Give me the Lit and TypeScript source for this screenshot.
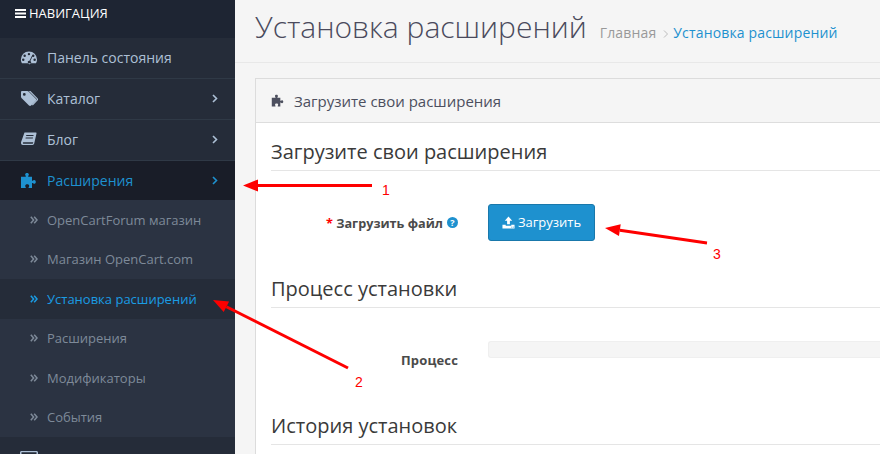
import { LitElement, html, css, svg } from "lit";
import { customElement } from "lit/decorators.js";

const PUZZLE = "M7 1c1.100 0 1.900.7 1.900 1.600 0 .7-.4 1.100-.7 1.500-.2.300-.1.700.3.700H12v3.600c0 .4.400.5.700.3.400-.3.800-.7 1.500-.7.900 0 1.600.8 1.600 1.900s-.7 1.900-1.600 1.900c-.7 0-1.100-.4-1.500-.7-.3-.2-.7-.1-.7.3V16H8.900c-.4 0-.5-.4-.3-.7.300-.4.600-.8.600-1.400 0-.9-.8-1.600-2-1.600s-2 .7-2 1.600c0 .6.300 1 .6 1.400.2.300.1.700-.3.700H1V4.800h4.500c.4 0 .5-.4.300-.7-.3-.4-.7-.8-.7-1.500C5.100 1.700 5.900 1 7 1z";

const ICONS: Record<string, unknown> = {
  dash: svg`<g transform="translate(.4 .6) scale(.95)"><path fill-rule="evenodd" d="M9 3a8.500 8.500 0 0 0-8.500 8.500c0 1.500.4 2.900 1.100 4h14.800c.7-1.100 1.100-2.500 1.100-4A8.500 8.500 0 0 0 9 3zM9 4.500a1.300 1.300 0 1 1 0 2.600 1.300 1.300 0 0 1 0-2.600zM4.500 6.300a1.300 1.300 0 1 1 0 2.600 1.300 1.300 0 0 1 0-2.600zM13.500 6.300a1.300 1.300 0 1 1 0 2.600 1.300 1.300 0 0 1 0-2.600zM3 10.500a1.300 1.300 0 1 1 0 2.600 1.300 1.300 0 0 1 0-2.600zM15 10.500a1.300 1.300 0 1 1 0 2.600 1.300 1.300 0 0 1 0-2.600zM12 7.800l.8.300-2.300 5a1.700 1.700 0 1 1-.9-.3z"/></g>`,
  tags: svg`<path d="M1 3.200C1 2.500 1.500 2 2.200 2h5c.6 0 1.200.3 1.600.7l7 7c.6.600.6 1.500 0 2.100l-4.700 4.700c-.6.600-1.500.6-2.100 0l-7-7C1.600 9.100 1 8.400 1 7.700zM4.300 4a1.400 1.400 0 1 0 0 2.800 1.400 1.400 0 0 0 0-2.800z" fill-rule="evenodd"/><path d="M10.500 2l7 7.200c.7.700.7 1.700 0 2.400l-4.700 4.900-.9-.9 4.600-4.700c.3-.3.300-.8 0-1.100L8.800 2z"/>`,
  book: svg`<path fill-rule="evenodd" d="M4.500 2.500h11.300c.5 0 .8.400.7.900l-2.300 10.200c-.2.800-.8 1.400-1.700 1.400H2.800c-1 0-1.800-1-1.800-2 0-.3 0-.6.100-.9zM6.300 5l-.2 1h7.300l.2-1zM5.700 7.500l-.2 1h7.300l.2-1zM3.400 12.300c-.3 0-.6.300-.6.700s.3.700.6.700h9.100c.3 0 .5-.2.600-.5l.1-.9z"/>`,
  puzzle: svg`<path d=${PUZZLE}/>`,
  tv: svg`<path fill-rule="evenodd" d="M1.500 1h15c.8 0 1.500.7 1.500 1.500v9c0 .8-.7 1.500-1.500 1.500h-15C.7 13 0 12.300 0 11.500v-9C0 1.700.7 1 1.500 1zM1.500 2.300v9h15v-9z"/>`,
};

const ARROWS: [number, number, number, number][] = [
  [372, 185.500, 243, 185.500],
  [348, 368, 213, 300],
  [707, 243, 605, 228],
];

function arrow([x1, y1, x2, y2]: [number, number, number, number]) {
  const a = Math.atan2(y1 - y2, x1 - x2);
  const len = 15;
  const w = 6;
  const bx = x2 + Math.cos(a) * len;
  const by = y2 + Math.sin(a) * len;
  const px = -Math.sin(a) * w;
  const py = Math.cos(a) * w;
  return svg`<line x1=${x1} y1=${y1} x2=${bx} y2=${by} stroke="#fe0000" stroke-width="3"/>
    <polygon fill="#fe0000" points="${x2},${y2} ${bx + px},${by + py} ${bx - px},${by - py}"/>`;
}

@customElement("app-root")
export class AppRoot extends LitElement {
  static styles = css`
    :host {
      display: block;
      width: 880px;
      height: 454px;
      overflow: hidden;
      position: relative;
      font-family: "Open Sans", "Noto Sans", sans-serif;
      background: #f5f5f5;
    }
    .layout { display: flex; height: 454px; }
    .side { width: 235px; flex: none; background: #2b3342; overflow: hidden; }
    .nav-head {
      height: 38px;
      background: #1e2533;
      color: #fff;
      font-size: 13px;
      line-height: 13px;
      padding: 7px 0 0 15px;
      box-sizing: border-box;
      display: flex;
      gap: 2px;
      align-items: flex-start;
    }
    .bars { width: 12px; height: 9px; margin-top: 2px; flex: none; }
    .item {
      height: 41px;
      box-sizing: border-box;
      background: #252c39;
      border-bottom: 1px solid #2f3946;
      display: flex;
      align-items: center;
      padding: 0 17px 2px 20px;
      color: #adc0d6;
      font-size: 14px;
    }
    .item svg.ic { width: 18px; height: 18px; fill: currentColor; flex: none; margin-right: 9px; }
    .item .t { flex: 1; }
    .item.active { background: #191d28; color: #1e91cf; border-bottom: 0; height: 39px; padding-bottom: 0; }
    .item.last { border-bottom: 0; padding: 3px 17px 0 20px; }
    .chev { width: 6px; height: 9px; fill: none; stroke: currentColor; stroke-width: 1.600; flex: none; }
    .sub {
      height: 39.500px;
      box-sizing: border-box;
      display: flex;
      align-items: center;
      padding: 0 0 0 30px;
      color: #7e8a99;
      font-size: 13px;
    }
    .sub.on { background: #252c39; color: #1a9ce4; }
    .sub svg { width: 8px; height: 8px; fill: none; stroke: currentColor; stroke-width: 1.500; margin-right: 9px; flex: none; }

    .main { flex: 1; min-width: 0; }
    .page-head {
      height: 63px;
      box-sizing: border-box;
      border-bottom: 1px solid #e8e8e8;
      padding: 0 0 0 20px;
      display: flex;
      align-items: baseline;
      white-space: nowrap;
    }
    h1 {
      margin: 3px 0 0;
      font-size: 30px;
      line-height: 48px;
      font-weight: 300;
      color: #4a4a5c;
    }
    .crumb { margin-left: 13px; font-size: 14px; letter-spacing: 0.150px; color: #999; display: flex; align-items: baseline; }
    .crumb svg { width: 6px; height: 8px; fill: none; stroke: #bbb; stroke-width: 1; margin: 0 4px 0 7px; }
    .crumb .cur { color: #1e91cf; }
    .panel {
      margin: 15px 0 0 20px;
      border: 1px solid #dcdcdc;
      border-width: 1px 0 0 1px;
      height: 400px;
      background: #fff;
    }
    .panel-head {
      height: 44px;
      box-sizing: border-box;
      background: #f5f5f5;
      border-bottom: 1px solid #ddd;
      display: flex;
      align-items: center;
      padding: 0 0 0 15px;
      color: #4c4f5e;
      font-size: 15px;
    }
    .panel-head svg { width: 14px; height: 14px; fill: currentColor; margin-right: 9px; }
    .body { padding: 14px 0 0 15px; }
    h3 {
      margin: 0;
      height: 33px;
      font-size: 20px;
      line-height: 29px;
      font-weight: 400;
      color: #3a3a3a;
      border-bottom: 1px solid #e5e5e5;
    }
    .row { display: grid; grid-template-columns: 187px 1fr; column-gap: 30px; height: 103px; padding-top: 33px; box-sizing: border-box; }
    label {
      font-size: 12.700px;
      font-weight: 700;
      color: #4a4a4a;
      text-align: right;
      display: flex;
      justify-content: flex-end;
      align-items: center;
      gap: 4px;
      height: 37px;
    }
    .r2 label { font-size: 13px; letter-spacing: 0.150px; }
    label .req { color: #f00; }
    .help {
      width: 11px; height: 11px; border-radius: 50%;
      background: #1e91cf; color: #fff; font-size: 9px; line-height: 11px;
      text-align: center; font-weight: 700; letter-spacing: 0;
    }
    .btn {
      width: 107px; height: 37px; box-sizing: border-box;
      background: #1e91cf; border: 1px solid #1978ab; border-radius: 3px;
      color: #fff; font-size: 13px;
      display: flex; align-items: center; justify-content: center; gap: 3px;
      padding: 0 0 1px;
      font-family: inherit;
    }
    .btn svg { width: 13px; height: 13px; fill: #fff; }
    .progress { height: 17px; background: #f5f5f5; border: 1px solid #efefef; box-sizing: border-box; border-right: 0; border-radius: 3px 0 0 3px; }
    .overlay { position: absolute; inset: 0; width: 880px; height: 454px; pointer-events: none; }
    .overlay text { font-family: "Liberation Sans", sans-serif; font-size: 14px; fill: #fe0000; }
  `;

  render() {
    const chev = html`<svg class="chev" viewBox="0 0 6 9"><path d="M1 1l3.500 3.500L1 8"/></svg>`;
    const item = (ic: string, t: string, more = true, cls = "") => html`
      <div class="item ${cls}">
        <svg class="ic" viewBox="0 0 18 18">${ICONS[ic]}</svg>
        <span class="t">${t}</span>
        ${more ? chev : null}
      </div>`;
    const sub = (t: string, on = false) => html`
      <div class="sub ${on ? "on" : ""}">
        <svg viewBox="0 0 8 8"><path d="M.8 .8L3.600 4 .8 7.200M4.200 .8L7 4 4.200 7.200"/></svg>
        <span>${t}</span>
      </div>`;
    return html`
      <div class="layout">
        <nav class="side">
          <div class="nav-head">
            <svg class="bars" viewBox="0 0 12 9" fill="#fff"><rect width="11" height="2"/><rect y="3.500" width="11" height="2"/><rect y="7" width="11" height="2"/></svg>
            <span>НАВИГАЦИЯ</span>
          </div>
          ${item("dash", "Панель состояния", false)}
          ${item("tags", "Каталог")}
          ${item("book", "Блог")}
          ${item("puzzle", "Расширения", true, "active")}
          ${sub("OpenCartForum магазин")}
          ${sub("Магазин OpenCart.com")}
          ${sub("Установка расширений", true)}
          ${sub("Расширения")}
          ${sub("Модификаторы")}
          ${sub("События")}
          ${item("tv", "Дизайн", false, "last")}
        </nav>
        <main class="main">
          <header class="page-head">
            <h1>Установка расширений</h1>
            <div class="crumb">
              <span>Главная</span>
              <svg viewBox="0 0 6 8"><path d="M1 .5L4.500 4 1 7.500"/></svg>
              <span class="cur">Установка расширений</span>
            </div>
          </header>
          <section class="panel">
            <div class="panel-head">
              <svg viewBox="0 0 18 18">${ICONS.puzzle}</svg>
              <span>Загрузите свои расширения</span>
            </div>
            <div class="body">
              <h3>Загрузите свои расширения</h3>
              <div class="row">
                <label><span><span class="req">*</span> Загрузить файл</span><span class="help">?</span></label>
                <div>
                  <button class="btn">
                    <svg viewBox="0 0 14 14"><path d="M7 .5L11 5H8.500v4h-3V5H3z"/><path fill-rule="evenodd" d="M.5 9.500h3.500v1h6v-1h3.500v4H.5zM10 11.500v1h1v-1zM11.700 11.500v1h1v-1z"/></svg>
                    <span>Загрузить</span>
                  </button>
                </div>
              </div>
              <h3>Процесс установки</h3>
              <div class="row r2">
                <label>Процесс</label>
                <div class="progress"></div>
              </div>
              <h3>История установок</h3>
            </div>
          </section>
        </main>
      </div>
      <svg class="overlay" viewBox="0 0 880 454">
        ${ARROWS.map(arrow)}
        <text x="382" y="195">1</text>
        <text x="355" y="387">2</text>
        <text x="713" y="259">3</text>
      </svg>
    `;
  }
}
